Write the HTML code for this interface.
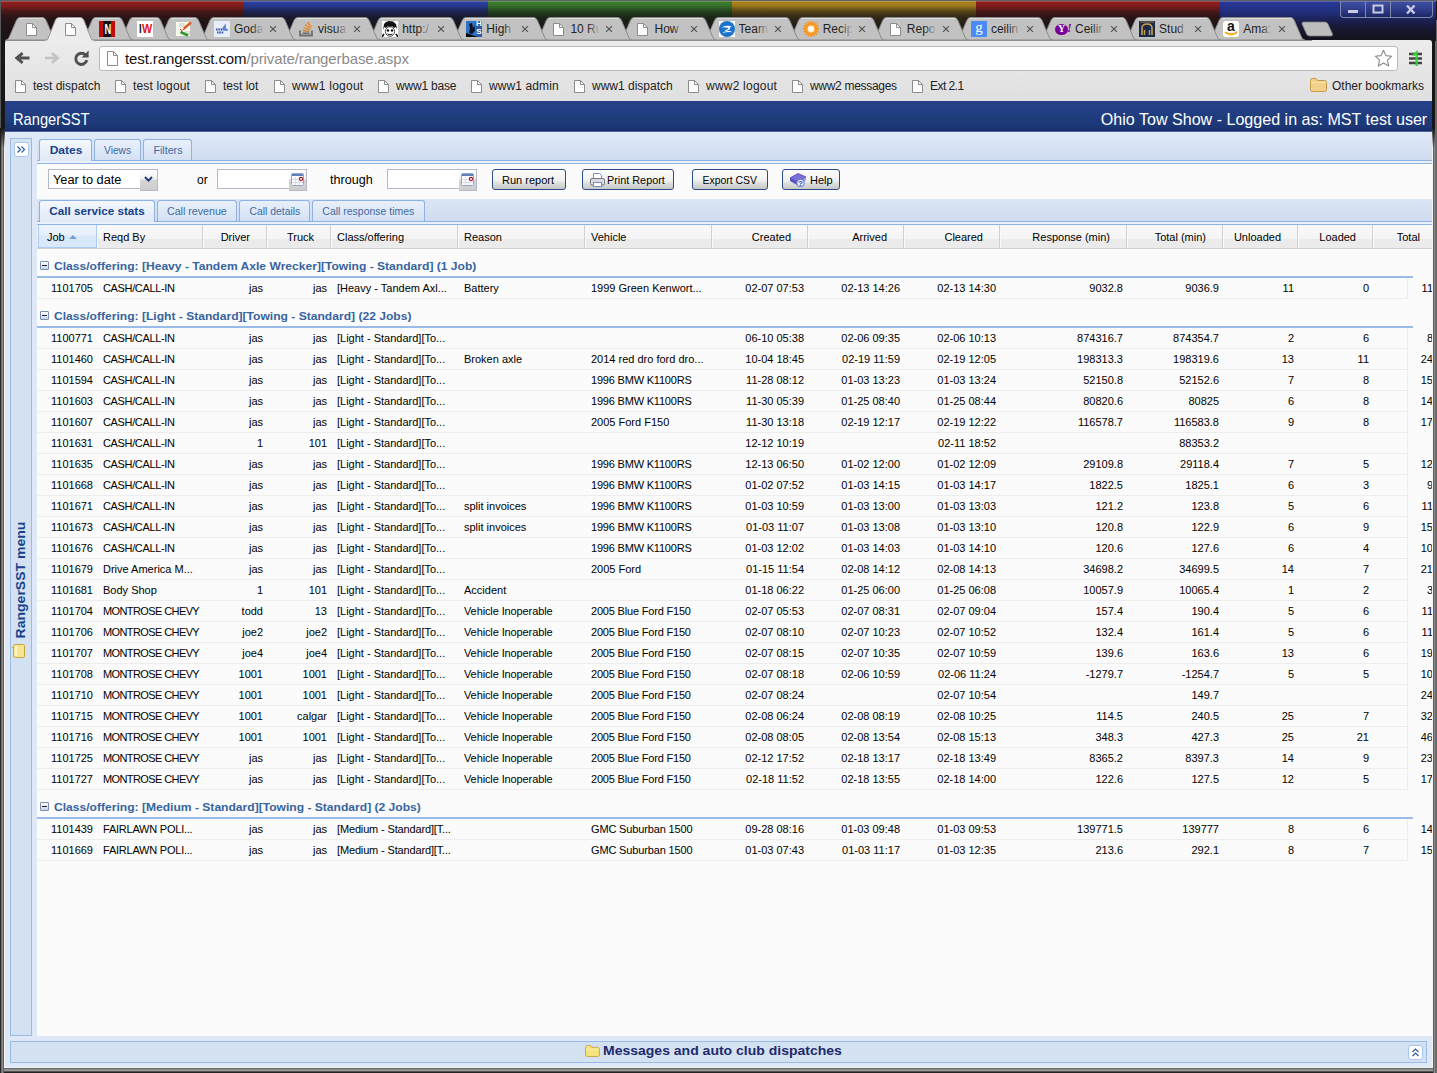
<!DOCTYPE html>
<html><head><meta charset="utf-8"><title>RangerSST</title>
<style>
*{box-sizing:border-box}
html,body{margin:0;padding:0}
body{width:1437px;height:1073px;overflow:hidden;background:#171717;position:relative;font-family:"Liberation Sans",sans-serif}
.abs,#win *{position:absolute}
#win{position:absolute;left:0;top:0;width:1437px;height:1073px;overflow:hidden}
/* title bar */
#tb{left:1px;top:1px;width:1435px;height:40px;background:#1b1b1b}
#tb .seg{top:0;height:40px;width:244px}
#tb .fade{left:0;top:0;width:1435px;height:40px;background:linear-gradient(rgba(20,18,20,0) 0,rgba(20,18,20,.05) 4px,rgba(20,18,20,.2) 6px,rgba(20,18,20,.38) 8px,rgba(20,18,20,.59) 11px,rgba(20,18,20,.73) 14px,rgba(20,18,20,.82) 17px,rgba(20,18,20,.88) 22px,rgba(20,18,20,.92) 30px,rgba(20,18,20,.94) 40px)}
#tb .hl{left:0;top:0;width:1435px;height:1px;background:rgba(255,255,255,.22)}
#frm i{display:block}
/* chrome toolbar */
#ct{left:5px;top:40px;width:1427px;height:61px;background:linear-gradient(#ececec,#e6e6e6 50%,#dfdfdf);border-radius:3px 3px 0 0}
.tabt{font-size:12px;color:#222;top:22px;white-space:nowrap;overflow:hidden;height:15px;line-height:15px}
.tabx{position:absolute}
#omni{left:99px;top:46px;width:1299px;height:25px;background:#fff;border:1px solid #b9b9b9;border-radius:3px}
#url{left:125px;top:49px;font-size:15px;line-height:19px;color:#111;white-space:nowrap;letter-spacing:-.11px}
#url b{position:static;font-weight:normal;color:#8a8a8a}
.bm{top:79px;font-size:12px;line-height:14px;color:#222;white-space:nowrap}
.ic,.fav{position:absolute}
.fav{width:16px;height:16px;top:21px}
.tabfade{top:20px;width:13px;height:18px;background:linear-gradient(90deg,rgba(194,194,194,0),#c2c2c2)}
#wc{left:1340px;top:1px;width:93px;height:17px;border:1px solid #7f88a8;border-top:none;border-radius:0 0 4px 4px;background:linear-gradient(rgba(255,255,255,.12),rgba(255,255,255,0))}
#wc i{top:0;width:1px;height:16px;background:#7f88a8}
/* page */
#pg{left:5px;top:101px;width:1427px;height:966px;background:#dfe8f6;overflow:hidden}
#hdr{left:0;top:0;width:1428px;height:31px;background:linear-gradient(#27408a 0,#233f85 10px,#1f3d7e 15px,#1d3877 24px,#1b3370 29px,#172a60 29px,#172a60 30px,#4a66a3 30px)}
#hdr span{color:#fff;font-size:17px;line-height:20px;top:9px;white-space:nowrap}
#west{left:5px;top:37px;width:22px;height:898px;border:1px solid #99bbe8;background:#d3e1f1}
#south{left:5px;top:940px;width:1417px;height:22px;border:1px solid #99bbe8;background:#d3e1f1}
.tool{width:15px;height:15px;border:1px solid #a9c4ec;border-radius:3px;background:#fff}
#wlbl{left:-50px;top:433px;width:120px;height:16px;line-height:16px;font-size:13px;font-weight:bold;color:#15428b;white-space:nowrap;text-align:center;transform:rotate(-90deg) scaleX(1.078);transform-origin:50% 50%}
#slbl{left:592px;top:1px;font-size:13px;line-height:16px;font-weight:bold;color:#1f2a6e;white-space:nowrap;transform:scaleX(1.077);transform-origin:0 50%}
#ctr{left:32px;top:37px;width:1396px;height:898px;background:#fbfbfb;overflow:hidden}
.strip{left:0;width:1396px;background:linear-gradient(#dbe6f5,#cfdcf0);border-bottom:1px solid #8db2e3}
.tab .sx{transform-origin:50% 50%}
.tab{border:1px solid #8db2e3;border-bottom:none;border-radius:3px 3px 0 0;background:linear-gradient(#e9f0fa,#d4e1f3);font-size:11px;color:#416aa3;text-align:center;line-height:20px;white-space:nowrap}
.tab.act{background:linear-gradient(#f4f8fd,#dfe8f6);color:#15428b;font-weight:bold}
.sx{position:static!important;display:inline-block;transform-origin:0 50%}
.lbl{font-size:12px;color:#000;line-height:14px;white-space:nowrap}
.fld{height:20px;border:1px solid #b5b8c8;background:#fff}
.trg{width:18px;height:22px;border:1px solid #b5b8c8;border-left:none;background:linear-gradient(#fdfdfd 0,#f3f3f3 45%,#d6d6d6 50%,#cdcdcd)}
.btn{height:21px;top:31px;border:1px solid #2c4a85;border-radius:3px;background:linear-gradient(#fdfdfd,#f0f0f0 55%,#dcdcdc 72%,#c9c9c9);font-size:11px;line-height:19px;padding-top:1px;color:#000;text-align:center;white-space:nowrap}
/* grid */
#grid{left:0;top:87px;width:1396px;height:812px;background:#fbfbfb;font-size:11px;color:#000;overflow:hidden}
.ghd{left:0;top:0;width:1500px;height:24px;background:linear-gradient(#f9f9f9,#f4f4f4 60%,#ebebeb 62%,#ebebeb);border-bottom:1px solid #d0d0d0}
.hc{top:0;height:23px;border-right:1px solid #d0d0d0;border-left:1px solid #fafafa}
.hc span{left:5px;top:6px;line-height:13px;white-space:nowrap}
.hc.hr span{left:auto;right:16px}
.hc.sorted{background:linear-gradient(#ebf3fd,#e6effb 45%,#d9e8fb 50%,#d9e8fb);border:1px solid #aaccf6;border-top:none}
.hc.sorted span{left:auto;right:auto;left:8px}
.sa{position:static!important;display:inline-block;width:0;height:0;border:4px solid transparent;border-top:none;border-bottom:4px solid #7a9bd3;margin-left:4px;vertical-align:2px}
.grp{left:0;width:1376px;height:29px;border-bottom:2px solid #99bbe8;font-weight:bold;color:#3764a0;font-size:11px;line-height:13px;padding:11px 0 0 17px;white-space:nowrap}
.gi{left:3px;top:12px;width:9px;height:9px;border:1px solid #7a8fb5;border-radius:1px;background:linear-gradient(#fff,#c9d3e6)}
.gi:after{content:"";position:absolute;left:1px;top:3px;width:5px;height:1px;background:#223}
.row{left:0;width:1371px;height:21px;border-bottom:1px solid #ededed;border-right:1px solid #ededed}
.c{top:4px;line-height:13px;white-space:nowrap;padding-left:6px}
.c.r{text-align:right;padding:0 4px 0 0}
</style></head><body>
<div id="win">
<div id="frm">
 <i style="left:0;top:0;width:1437px;height:1px;background:#5d6166"></i>
 <i style="left:0;top:1px;width:1px;height:1072px;background:#55585c"></i>
 <i style="left:0;top:128px;width:5px;height:945px;background:linear-gradient(90deg,#2a2a2a 0,#2a2a2a 1px,#6c6c6c 1px,#6c6c6c 2px,#8e8e8e 2px,#8e8e8e 3px,#5e5e5e 3px,#5e5e5e 4px,#f4f4f4 4px)"></i>
 <i style="left:0;top:128px;width:5px;height:20px;background:linear-gradient(#171717,rgba(23,23,23,0))"></i>
 <i style="left:1432px;top:128px;width:5px;height:945px;background:linear-gradient(90deg,#f4f4f4 0,#f4f4f4 1px,#5e5e5e 1px,#5e5e5e 2px,#8e8e8e 2px,#8e8e8e 3px,#6c6c6c 3px,#6c6c6c 4px,#2a2a2a 4px)"></i>
 <i style="left:1432px;top:128px;width:5px;height:20px;background:linear-gradient(#171717,rgba(23,23,23,0))"></i>
 <i style="left:1435px;top:20px;width:2px;height:1053px;background:#6a6a6a"></i>
 <i style="left:4px;top:1067px;width:1429px;height:6px;background:linear-gradient(#f4f4f4 0,#f4f4f4 1px,#666 1px,#666 2px,#8c8c8c 2px,#9a9a9a 4px,#555 4px,#555 5px,#222 5px)"></i>
</div>
<div id="tb">
 <div class="seg" style="left:0;background:#8c1f1d"></div>
 <div class="seg" style="left:243px;background:#2a3d9c"></div>
 <div class="seg" style="left:487px;background:#3a7a2c"></div>
 <div class="seg" style="left:731px;background:#a9811c"></div>
 <div class="seg" style="left:975px;background:#8c1f1d"></div>
 <div class="fade"></div>
 <div class="seg" style="left:1219px;width:216px;background:linear-gradient(#283894 0,#263590 4px,#222f80 10px,#1e2868 15px,#1b2050 20px,#18193a 25px,#16162a 30px,#14141c 40px)"></div><div class="hl"></div>
</div>
<div id="ct"></div>
<svg id="tabsvg" style="left:0;top:0" width="1437" height="42" viewBox="0 0 1437 42">
<path d="M1208.6999999999998,40 Q1210.9999999999998,40 1211.9999999999998,37 L1219.1,20.5 Q1220.1,17.5 1223.1999999999998,17.5 L1290.1999999999998,17.5 Q1293.2999999999997,17.5 1294.2999999999997,20.5 L1301.3999999999999,37 Q1302.3999999999999,40 1304.6999999999998,40Z" fill="#c2c2c2" stroke="#8b8b8b" stroke-width="1"/>
<path d="M1221.6999999999998,18.5H1291.6999999999998" stroke="#dcdcdc" stroke-width="1"/>
<path d="M1124.6,40 Q1126.8999999999999,40 1127.8999999999999,37 L1135.0,20.5 Q1136.0,17.5 1139.1,17.5 L1206.1,17.5 Q1209.1999999999998,17.5 1210.1999999999998,20.5 L1217.3,37 Q1218.3,40 1220.6,40Z" fill="#c2c2c2" stroke="#8b8b8b" stroke-width="1"/>
<path d="M1137.6,18.5H1207.6" stroke="#dcdcdc" stroke-width="1"/>
<path d="M1040.5,40 Q1042.8,40 1043.8,37 L1050.9,20.5 Q1051.9,17.5 1055.0,17.5 L1122.0,17.5 Q1125.1,17.5 1126.1,20.5 L1133.2,37 Q1134.2,40 1136.5,40Z" fill="#c2c2c2" stroke="#8b8b8b" stroke-width="1"/>
<path d="M1053.5,18.5H1123.5" stroke="#dcdcdc" stroke-width="1"/>
<path d="M956.4,40 Q958.6999999999999,40 959.6999999999999,37 L966.8,20.5 Q967.8,17.5 970.9,17.5 L1037.9,17.5 Q1041.0,17.5 1042.0,20.5 L1049.1000000000001,37 Q1050.1000000000001,40 1052.4,40Z" fill="#c2c2c2" stroke="#8b8b8b" stroke-width="1"/>
<path d="M969.4,18.5H1039.4" stroke="#dcdcdc" stroke-width="1"/>
<path d="M872.3,40 Q874.5999999999999,40 875.5999999999999,37 L882.6999999999999,20.5 Q883.6999999999999,17.5 886.8,17.5 L953.8,17.5 Q956.9,17.5 957.9,20.5 L965.0,37 Q966.0,40 968.3,40Z" fill="#c2c2c2" stroke="#8b8b8b" stroke-width="1"/>
<path d="M885.3,18.5H955.3" stroke="#dcdcdc" stroke-width="1"/>
<path d="M788.1999999999999,40 Q790.4999999999999,40 791.4999999999999,37 L798.5999999999999,20.5 Q799.5999999999999,17.5 802.6999999999999,17.5 L869.6999999999999,17.5 Q872.8,17.5 873.8,20.5 L880.9,37 Q881.9,40 884.1999999999999,40Z" fill="#c2c2c2" stroke="#8b8b8b" stroke-width="1"/>
<path d="M801.1999999999999,18.5H871.1999999999999" stroke="#dcdcdc" stroke-width="1"/>
<path d="M704.0999999999999,40 Q706.3999999999999,40 707.3999999999999,37 L714.4999999999999,20.5 Q715.4999999999999,17.5 718.5999999999999,17.5 L785.5999999999999,17.5 Q788.6999999999999,17.5 789.6999999999999,20.5 L796.8,37 Q797.8,40 800.0999999999999,40Z" fill="#c2c2c2" stroke="#8b8b8b" stroke-width="1"/>
<path d="M717.0999999999999,18.5H787.0999999999999" stroke="#dcdcdc" stroke-width="1"/>
<path d="M620.0,40 Q622.3,40 623.3,37 L630.4,20.5 Q631.4,17.5 634.5,17.5 L701.5,17.5 Q704.6,17.5 705.6,20.5 L712.7,37 Q713.7,40 716.0,40Z" fill="#c2c2c2" stroke="#8b8b8b" stroke-width="1"/>
<path d="M633.0,18.5H703.0" stroke="#dcdcdc" stroke-width="1"/>
<path d="M535.9,40 Q538.1999999999999,40 539.1999999999999,37 L546.3,20.5 Q547.3,17.5 550.4,17.5 L617.4,17.5 Q620.5,17.5 621.5,20.5 L628.6,37 Q629.6,40 631.9,40Z" fill="#c2c2c2" stroke="#8b8b8b" stroke-width="1"/>
<path d="M548.9,18.5H618.9" stroke="#dcdcdc" stroke-width="1"/>
<path d="M451.79999999999995,40 Q454.09999999999997,40 455.09999999999997,37 L462.19999999999993,20.5 Q463.19999999999993,17.5 466.29999999999995,17.5 L533.3,17.5 Q536.4,17.5 537.4,20.5 L544.5,37 Q545.5,40 547.8,40Z" fill="#c2c2c2" stroke="#8b8b8b" stroke-width="1"/>
<path d="M464.79999999999995,18.5H534.8" stroke="#dcdcdc" stroke-width="1"/>
<path d="M367.7,40 Q370.0,40 371.0,37 L378.09999999999997,20.5 Q379.09999999999997,17.5 382.2,17.5 L449.2,17.5 Q452.3,17.5 453.3,20.5 L460.4,37 Q461.4,40 463.7,40Z" fill="#c2c2c2" stroke="#8b8b8b" stroke-width="1"/>
<path d="M380.7,18.5H450.7" stroke="#dcdcdc" stroke-width="1"/>
<path d="M283.6,40 Q285.90000000000003,40 286.90000000000003,37 L294.0,20.5 Q295.0,17.5 298.1,17.5 L365.1,17.5 Q368.20000000000005,17.5 369.20000000000005,20.5 L376.3,37 Q377.3,40 379.6,40Z" fill="#c2c2c2" stroke="#8b8b8b" stroke-width="1"/>
<path d="M296.6,18.5H366.6" stroke="#dcdcdc" stroke-width="1"/>
<path d="M199.5,40 Q201.8,40 202.8,37 L209.9,20.5 Q210.9,17.5 214.0,17.5 L281.0,17.5 Q284.1,17.5 285.1,20.5 L292.2,37 Q293.2,40 295.5,40Z" fill="#c2c2c2" stroke="#8b8b8b" stroke-width="1"/>
<path d="M212.5,18.5H282.5" stroke="#dcdcdc" stroke-width="1"/>
<path d="M158,40 Q160.3,40 161.3,37 L168.4,20.5 Q169.4,17.5 172.5,17.5 L194.5,17.5 Q197.6,17.5 198.6,20.5 L205.7,37 Q206.7,40 209,40Z" fill="#c2c2c2" stroke="#8b8b8b" stroke-width="1"/>
<path d="M171,18.5H196" stroke="#dcdcdc" stroke-width="1"/>
<path d="M119,40 Q121.3,40 122.3,37 L129.4,20.5 Q130.4,17.5 133.5,17.5 L156.5,17.5 Q159.6,17.5 160.6,20.5 L167.7,37 Q168.7,40 171,40Z" fill="#c2c2c2" stroke="#8b8b8b" stroke-width="1"/>
<path d="M132,18.5H158" stroke="#dcdcdc" stroke-width="1"/>
<path d="M81.5,40 Q83.8,40 84.8,37 L91.9,20.5 Q92.9,17.5 96.0,17.5 L118.3,17.5 Q121.39999999999999,17.5 122.39999999999999,20.5 L129.5,37 Q130.5,40 132.8,40Z" fill="#c2c2c2" stroke="#8b8b8b" stroke-width="1"/>
<path d="M94.5,18.5H119.8" stroke="#dcdcdc" stroke-width="1"/>
<path d="M6,40 Q8.3,40 9.3,37 L16.4,20.5 Q17.4,17.5 20.5,17.5 L42.0,17.5 Q45.1,17.5 46.1,20.5 L53.2,37 Q54.2,40 56.5,40Z" fill="#c2c2c2" stroke="#8b8b8b" stroke-width="1"/>
<path d="M19,18.5H43.5" stroke="#dcdcdc" stroke-width="1"/>
<path d="M1303.5,22 H1325 Q1327,22 1328,24 L1332.5,34 Q1333,36 1331,36 H1309.5 Q1307.5,36 1306.5,34 L1302,24 Q1301.5,22 1303.5,22Z" fill="#bdbdbd" stroke="#7d7d7d" stroke-width=".8"/>
<path d="M5,40.5H1312" stroke="#8f8f8f" stroke-width="1"/>
<path d="M44.8,41.5 Q47.099999999999994,41.5 48.099999999999994,38.5 L55.199999999999996,20.5 Q56.199999999999996,17.5 59.3,17.5 L79.9,17.5 Q83.0,17.5 84.0,20.5 L91.10000000000001,38.5 Q92.10000000000001,41.5 94.4,41.5Z" fill="#ececec" stroke="#9a9a9a" stroke-width="1"/>
<path d="M44.8,41.5H94.4" stroke="#ececec" stroke-width="2"/>
<path d="M57.8,18.5H81.4" stroke="#fafafa" stroke-width="1"/>
</svg>
<svg class="ic" style="left:26px;top:22.5px" width="11" height="13" viewBox="0 0 11 13"><path d="M.5 .5H6.5L10.5 4.5V12.5H.5Z" fill="#fdfdfd" stroke="#8c8c8c"/><path d="M6.5 .5V4.5H10.5" fill="none" stroke="#8c8c8c"/></svg>
<svg class="ic" style="left:65px;top:22.5px" width="11" height="13" viewBox="0 0 11 13"><path d="M.5 .5H6.5L10.5 4.5V12.5H.5Z" fill="#fdfdfd" stroke="#8c8c8c"/><path d="M6.5 .5V4.5H10.5" fill="none" stroke="#8c8c8c"/></svg>
<div class="fav" style="left:99px;top:21px"><div style="left:0;top:0;width:16px;height:16px;background:#c20c0c"></div><div style="left:4px;top:0;width:8px;height:16px;background:#161616"></div><span style="left:4px;top:0;width:8px;color:#fff;font-weight:bold;font-size:15px;line-height:16px;text-align:center;transform:scaleX(.62);transform-origin:50% 50%">N</span></div>
<div class="fav" style="left:137px;top:21px"><div style="left:0;top:0;width:16px;height:16px;background:#fff"></div><span style="left:2px;top:2px;font-weight:bold;font-size:12px;line-height:13px;color:#111;transform:scaleX(.8);transform-origin:0 50%">I</span><span style="left:5px;top:2px;font-weight:bold;font-size:12px;line-height:13px;color:#e4131b;transform:scaleX(.9);transform-origin:0 50%">W</span></div>
<svg class="fav" style="left:176px;top:21px" width="16" height="16" viewBox="0 0 16 16"><rect x="0" y="1" width="14" height="14" fill="#fbf8ee"/><path d="M3 3h6M3 5h5M9 11h5M10 13h4" stroke="#c9c9b8" stroke-width="1"/><path d="M15 1.5L8 7.5" stroke="#d2622a" stroke-width="2.6"/><path d="M8.3 7.2L5.5 9.5L8.8 8.6Z" fill="#c8251d"/><path d="M4.5 11L12 14.5" stroke="#2f9a2f" stroke-width="3"/><path d="M4 8l2 2" stroke="#d33" stroke-width="1"/></svg>
<svg class="fav" style="left:214px;top:21px" width="16" height="16" viewBox="0 0 16 16"><rect width="16" height="16" fill="#e8eef8"/><path d="M8 7.5L11.5 2.5L12 7.5L14.5 8.5L13 10L8.5 9.5Z" fill="#5f83cc"/><path d="M2 8.5h6M3 11.5h7" stroke="#3b5aa8" stroke-width="1.8" stroke-dasharray="1.6 .7"/></svg>
<div class="tabt" style="left:234.0px;width:29px">Goda</div>
<div class="tabfade" style="left:251.0px"></div>
<svg class="tabx" style="left:269.0px;top:24.5px" width="8" height="8" viewBox="0 0 9 9"><path d="M1.2 1.2L7.8 7.8M7.8 1.2L1.2 7.8" stroke="#555" stroke-width="1.35"/></svg>
<svg class="fav" style="left:298px;top:21px" width="16" height="16" viewBox="0 0 16 16"><path d="M2 9.5v5h12v-5" fill="none" stroke="#6e6e6e" stroke-width="1.8"/><path d="M4.5 12.2h7" stroke="#6e6e6e" stroke-width="1.5"/><path d="M4.7 9.6l6.8.9" stroke="#c9853f" stroke-width="1.5"/><path d="M5.4 6.6l6.4 2.3" stroke="#dd8a33" stroke-width="1.5"/><path d="M7 3.6l5.4 3.9" stroke="#ee8a22" stroke-width="1.5"/><path d="M9.6 1.2l3.6 5.2" stroke="#f48024" stroke-width="1.5"/></svg>
<div class="tabt" style="left:318.1px;width:29px">visua</div>
<div class="tabfade" style="left:335.1px"></div>
<svg class="tabx" style="left:353.1px;top:24.5px" width="8" height="8" viewBox="0 0 9 9"><path d="M1.2 1.2L7.8 7.8M7.8 1.2L1.2 7.8" stroke="#555" stroke-width="1.35"/></svg>
<svg class="fav" style="left:382px;top:21px" width="16" height="16" viewBox="0 0 16 16"><rect width="16" height="16" fill="#fff"/><path d="M1 9L2 3L4 1L7 0L11 0.5L14 3L15 8L13.5 6L12 7L10 5L8 7L6 5L4 7L2.5 6Z" fill="#111"/><ellipse cx="8" cy="10.5" rx="4.6" ry="4.8" fill="#fff" stroke="#222" stroke-width=".8"/><circle cx="6" cy="9.5" r="1.2" fill="#111"/><circle cx="10" cy="9.5" r="1.2" fill="#111"/><path d="M5.5 13q2.5 1.6 5 0" stroke="#111" fill="none"/><path d="M0 16l2-3M16 16l-2-3" stroke="#111" stroke-width="1.6"/></svg>
<div class="tabt" style="left:402.2px;width:29px">http:/</div>
<div class="tabfade" style="left:419.2px"></div>
<svg class="tabx" style="left:437.2px;top:24.5px" width="8" height="8" viewBox="0 0 9 9"><path d="M1.2 1.2L7.8 7.8M7.8 1.2L1.2 7.8" stroke="#555" stroke-width="1.35"/></svg>
<svg class="fav" style="left:466px;top:21px" width="16" height="16" viewBox="0 0 16 16"><rect width="16" height="16" fill="#1e3f86"/><path d="M0 0H16V16H0Z" fill="#2f74c4"/><path d="M3 3L6 2L7 7L8.5 4L9 10L6 13L3 12L4 7Z" fill="#0c1424"/><path d="M0 12L12 16H0Z" fill="#050608"/><path d="M9 0H16V16H11Z" fill="#2a5aa8"/></svg><span class="fav" style="left:476px;top:20px;width:6px;color:#fff;font-weight:bold;font-size:8px;line-height:8px;text-align:center">H</span><span class="fav" style="left:476px;top:28px;width:6px;color:#fff;font-weight:bold;font-size:8px;line-height:8px;text-align:center">S</span>
<div class="tabt" style="left:486.3px;width:29px">High</div>
<div class="tabfade" style="left:503.3px"></div>
<svg class="tabx" style="left:521.3px;top:24.5px" width="8" height="8" viewBox="0 0 9 9"><path d="M1.2 1.2L7.8 7.8M7.8 1.2L1.2 7.8" stroke="#555" stroke-width="1.35"/></svg>
<svg class="ic" style="left:553px;top:22.5px" width="11" height="13" viewBox="0 0 11 13"><path d="M.5 .5H6.5L10.5 4.5V12.5H.5Z" fill="#fdfdfd" stroke="#8c8c8c"/><path d="M6.5 .5V4.5H10.5" fill="none" stroke="#8c8c8c"/></svg>
<div class="tabt" style="left:570.4px;width:29px">10 Ru</div>
<div class="tabfade" style="left:587.4px"></div>
<svg class="tabx" style="left:605.4px;top:24.5px" width="8" height="8" viewBox="0 0 9 9"><path d="M1.2 1.2L7.8 7.8M7.8 1.2L1.2 7.8" stroke="#555" stroke-width="1.35"/></svg>
<svg class="ic" style="left:637px;top:22.5px" width="11" height="13" viewBox="0 0 11 13"><path d="M.5 .5H6.5L10.5 4.5V12.5H.5Z" fill="#fdfdfd" stroke="#8c8c8c"/><path d="M6.5 .5V4.5H10.5" fill="none" stroke="#8c8c8c"/></svg>
<div class="tabt" style="left:654.5px;width:29px">How</div>
<div class="tabfade" style="left:671.5px"></div>
<svg class="tabx" style="left:689.5px;top:24.5px" width="8" height="8" viewBox="0 0 9 9"><path d="M1.2 1.2L7.8 7.8M7.8 1.2L1.2 7.8" stroke="#555" stroke-width="1.35"/></svg>
<svg class="fav" style="left:719px;top:21px" width="16" height="16" viewBox="0 0 16 16"><rect width="16" height="16" fill="#fff"/><circle cx="8" cy="8" r="8" fill="#1b74c9"/><path d="M2.2 6.2Q8 3.6 13 5.4L10.8 6.3Q12 8.4 8.4 9.6Q5 10.5 3.2 12.4Q7.5 10.7 13.6 11.2Q9 8.7 5.4 11.5Q5 9 9 7.9Q10 7.4 9.2 6.8Q6 6 2.2 6.2Z" fill="#fff"/></svg>
<div class="tabt" style="left:738.6px;width:29px">Team</div>
<div class="tabfade" style="left:755.6px"></div>
<svg class="tabx" style="left:773.6px;top:24.5px" width="8" height="8" viewBox="0 0 9 9"><path d="M1.2 1.2L7.8 7.8M7.8 1.2L1.2 7.8" stroke="#555" stroke-width="1.35"/></svg>
<svg class="fav" style="left:803px;top:21px" width="16" height="16" viewBox="0 0 16 16"><circle cx="8" cy="8" r="6.8" fill="#f9a53a"/><path d="M8 8L15.94 7.04L15.94 8.96Z" fill="#f7941d"/><path d="M8 8L15.70 10.15L14.97 11.92Z" fill="#f7941d"/><path d="M8 8L14.29 12.94L12.94 14.29Z" fill="#f7941d"/><path d="M8 8L11.92 14.97L10.15 15.70Z" fill="#f7941d"/><path d="M8 8L8.96 15.94L7.04 15.94Z" fill="#f7941d"/><path d="M8 8L5.85 15.70L4.08 14.97Z" fill="#f7941d"/><path d="M8 8L3.06 14.29L1.71 12.94Z" fill="#f7941d"/><path d="M8 8L1.03 11.92L0.30 10.15Z" fill="#f7941d"/><path d="M8 8L0.06 8.96L0.06 7.04Z" fill="#f7941d"/><path d="M8 8L0.30 5.85L1.03 4.08Z" fill="#f7941d"/><path d="M8 8L1.71 3.06L3.06 1.71Z" fill="#f7941d"/><path d="M8 8L4.08 1.03L5.85 0.30Z" fill="#f7941d"/><path d="M8 8L7.04 0.06L8.96 0.06Z" fill="#f7941d"/><path d="M8 8L10.15 0.30L11.92 1.03Z" fill="#f7941d"/><path d="M8 8L12.94 1.71L14.29 3.06Z" fill="#f7941d"/><path d="M8 8L14.97 4.08L15.70 5.85Z" fill="#f7941d"/><circle cx="8" cy="8" r="3.4" fill="#fff3d6"/><circle cx="8" cy="8" r="2" fill="#fff"/></svg>
<div class="tabt" style="left:822.7px;width:29px">Recip</div>
<div class="tabfade" style="left:839.7px"></div>
<svg class="tabx" style="left:857.7px;top:24.5px" width="8" height="8" viewBox="0 0 9 9"><path d="M1.2 1.2L7.8 7.8M7.8 1.2L1.2 7.8" stroke="#555" stroke-width="1.35"/></svg>
<svg class="ic" style="left:890px;top:22.5px" width="11" height="13" viewBox="0 0 11 13"><path d="M.5 .5H6.5L10.5 4.5V12.5H.5Z" fill="#fdfdfd" stroke="#8c8c8c"/><path d="M6.5 .5V4.5H10.5" fill="none" stroke="#8c8c8c"/></svg>
<div class="tabt" style="left:906.8px;width:29px">Repo</div>
<div class="tabfade" style="left:923.8px"></div>
<svg class="tabx" style="left:941.8px;top:24.5px" width="8" height="8" viewBox="0 0 9 9"><path d="M1.2 1.2L7.8 7.8M7.8 1.2L1.2 7.8" stroke="#555" stroke-width="1.35"/></svg>
<div class="fav" style="left:971px;top:21px"><div style="left:0;top:0;width:16px;height:16px;background:#4a8af4;border-radius:1px"></div><span style="left:0;top:-2px;width:16px;text-align:center;color:#fff;font-size:15px;line-height:16px;font-family:'Liberation Serif',serif">g</span></div>
<div class="tabt" style="left:990.9px;width:29px">ceilin</div>
<div class="tabfade" style="left:1007.9px"></div>
<svg class="tabx" style="left:1025.9px;top:24.5px" width="8" height="8" viewBox="0 0 9 9"><path d="M1.2 1.2L7.8 7.8M7.8 1.2L1.2 7.8" stroke="#555" stroke-width="1.35"/></svg>
<div class="fav" style="left:1055px;top:21px"><div style="left:0;top:3px;width:13px;height:11px;border-radius:50%;background:#7b0099"></div><span style="left:1px;top:2px;width:11px;text-align:center;color:#fff;font-weight:bold;font-size:10px;line-height:12px;font-family:'Liberation Serif',serif">Y</span><span style="left:12px;top:1px;color:#7b0099;font-weight:bold;font-size:12px;line-height:13px;font-style:italic;font-family:'Liberation Serif',serif">!</span></div>
<div class="tabt" style="left:1075.0px;width:29px">Ceilir</div>
<div class="tabfade" style="left:1092.0px"></div>
<svg class="tabx" style="left:1110.0px;top:24.5px" width="8" height="8" viewBox="0 0 9 9"><path d="M1.2 1.2L7.8 7.8M7.8 1.2L1.2 7.8" stroke="#555" stroke-width="1.35"/></svg>
<svg class="fav" style="left:1139px;top:21px" width="16" height="16" viewBox="0 0 16 16"><rect width="16" height="16" fill="#1c2a4a"/><path d="M3 14V7Q3 3 8 3Q13 3 13 7V14" fill="none" stroke="#caa04a" stroke-width="1.6"/><path d="M5.5 14V9M10.5 14V9" stroke="#caa04a" stroke-width="1.4"/><path d="M1 1h14" stroke="#8a7a4a" stroke-width="1"/></svg>
<div class="tabt" style="left:1159.1px;width:29px">Stud</div>
<div class="tabfade" style="left:1176.1px"></div>
<svg class="tabx" style="left:1194.1px;top:24.5px" width="8" height="8" viewBox="0 0 9 9"><path d="M1.2 1.2L7.8 7.8M7.8 1.2L1.2 7.8" stroke="#555" stroke-width="1.35"/></svg>
<div class="fav" style="left:1223px;top:21px"><div style="left:0;top:0;width:16px;height:16px;background:#fff;border-radius:3px"></div><span style="left:0;top:-3px;width:16px;text-align:center;color:#111;font-weight:bold;font-size:14px;line-height:16px">a</span><svg style="left:0;top:0" width="16" height="16" viewBox="0 0 16 16"><path d="M2 11.2Q8 15.4 13.4 11.6" fill="none" stroke="#f90" stroke-width="1.6"/><path d="M12 10.6l2.6-.2-.8 2.4z" fill="#f90"/></svg></div>
<div class="tabt" style="left:1243.2px;width:29px">Ama:</div>
<div class="tabfade" style="left:1260.2px"></div>
<svg class="tabx" style="left:1278.2px;top:24.5px" width="8" height="8" viewBox="0 0 9 9"><path d="M1.2 1.2L7.8 7.8M7.8 1.2L1.2 7.8" stroke="#555" stroke-width="1.35"/></svg>
<div id="omni"></div>
<div id="url">test.rangersst.com<b>/private/rangerbase.aspx</b></div>
<svg class="ic" style="left:13px;top:50px" width="80" height="18" viewBox="0 0 80 18">
<path d="M16.5 8H6.5M9.6 3.2L3.8 8L9.6 12.8" fill="none" stroke="#4f4f4f" stroke-width="2.9" stroke-linejoin="miter"/>
<path d="M32 8H42M38.9 3.2L44.7 8L38.9 12.8" fill="none" stroke="#c2c2c2" stroke-width="2.7"/>
<path d="M72.6 5.2A5.6 5.6 0 1 0 73.8 10.2" fill="none" stroke="#4f4f4f" stroke-width="2.9"/>
<path d="M75.6 .6V7.6H68.6Z" fill="#4f4f4f"/>
</svg>
<svg class="ic" style="left:107px;top:51px" width="11" height="15" viewBox="0 0 11 15"><path d="M.5 .5H6.5L10.5 4.5V14.5H.5Z" fill="#fdfdfd" stroke="#8c8c8c"/><path d="M6.5 .5V4.5H10.5" fill="none" stroke="#8c8c8c"/></svg>
<svg class="ic" style="left:1374px;top:49px" width="19" height="18" viewBox="0 0 19 18"><path d="M9.5 1.2L11.9 6.6L17.8 7.2L13.4 11.1L14.7 16.9L9.5 13.9L4.3 16.9L5.6 11.1L1.2 7.2L7.1 6.6Z" fill="#fff" stroke="#8a8a8a" stroke-width="1.1" stroke-linejoin="round"/></svg>
<svg class="ic" style="left:1408px;top:50px" width="16" height="17" viewBox="0 0 16 17"><path d="M1 4H14M1 8.5H14M1 13H14" stroke="#444" stroke-width="2.4"/><path d="M5 5.5L8.6 2.4V16" fill="none" stroke="#2fd32f" stroke-width="2.2"/></svg>
<div id="wc"><i style="left:24px"></i><i style="left:49px"></i>
<svg style="left:0;top:0" width="91" height="16" viewBox="0 0 91 16"><path d="M7 10.5H17" stroke="#c9cbe0" stroke-width="3"/><rect x="32.5" y="4.5" width="9" height="7" fill="none" stroke="#c9cbe0" stroke-width="2"/><path d="M66 4.5L73.5 12.5M73.5 4.5L66 12.5" stroke="#c9cbe0" stroke-width="2.4"/></svg></div>
<svg class="ic" style="left:15px;top:79.5px" width="11" height="13" viewBox="0 0 11 13"><path d="M.5 .5H6.5L10.5 4.5V12.5H.5Z" fill="#fdfdfd" stroke="#8c8c8c"/><path d="M6.5 .5V4.5H10.5" fill="none" stroke="#8c8c8c"/></svg>
<div class="bm" style="left:33px;letter-spacing:0px">test dispatch</div>
<svg class="ic" style="left:115px;top:79.5px" width="11" height="13" viewBox="0 0 11 13"><path d="M.5 .5H6.5L10.5 4.5V12.5H.5Z" fill="#fdfdfd" stroke="#8c8c8c"/><path d="M6.5 .5V4.5H10.5" fill="none" stroke="#8c8c8c"/></svg>
<div class="bm" style="left:133px;letter-spacing:0.15px">test logout</div>
<svg class="ic" style="left:205px;top:79.5px" width="11" height="13" viewBox="0 0 11 13"><path d="M.5 .5H6.5L10.5 4.5V12.5H.5Z" fill="#fdfdfd" stroke="#8c8c8c"/><path d="M6.5 .5V4.5H10.5" fill="none" stroke="#8c8c8c"/></svg>
<div class="bm" style="left:223px;letter-spacing:0px">test lot</div>
<svg class="ic" style="left:274px;top:79.5px" width="11" height="13" viewBox="0 0 11 13"><path d="M.5 .5H6.5L10.5 4.5V12.5H.5Z" fill="#fdfdfd" stroke="#8c8c8c"/><path d="M6.5 .5V4.5H10.5" fill="none" stroke="#8c8c8c"/></svg>
<div class="bm" style="left:292px;letter-spacing:0.25px">www1 logout</div>
<svg class="ic" style="left:378px;top:79.5px" width="11" height="13" viewBox="0 0 11 13"><path d="M.5 .5H6.5L10.5 4.5V12.5H.5Z" fill="#fdfdfd" stroke="#8c8c8c"/><path d="M6.5 .5V4.5H10.5" fill="none" stroke="#8c8c8c"/></svg>
<div class="bm" style="left:396px;letter-spacing:-0.2px">www1 base</div>
<svg class="ic" style="left:471px;top:79.5px" width="11" height="13" viewBox="0 0 11 13"><path d="M.5 .5H6.5L10.5 4.5V12.5H.5Z" fill="#fdfdfd" stroke="#8c8c8c"/><path d="M6.5 .5V4.5H10.5" fill="none" stroke="#8c8c8c"/></svg>
<div class="bm" style="left:489px;letter-spacing:0.1px">www1 admin</div>
<svg class="ic" style="left:574px;top:79.5px" width="11" height="13" viewBox="0 0 11 13"><path d="M.5 .5H6.5L10.5 4.5V12.5H.5Z" fill="#fdfdfd" stroke="#8c8c8c"/><path d="M6.5 .5V4.5H10.5" fill="none" stroke="#8c8c8c"/></svg>
<div class="bm" style="left:592px;letter-spacing:0px">www1 dispatch</div>
<svg class="ic" style="left:688px;top:79.5px" width="11" height="13" viewBox="0 0 11 13"><path d="M.5 .5H6.5L10.5 4.5V12.5H.5Z" fill="#fdfdfd" stroke="#8c8c8c"/><path d="M6.5 .5V4.5H10.5" fill="none" stroke="#8c8c8c"/></svg>
<div class="bm" style="left:706px;letter-spacing:0.22px">www2 logout</div>
<svg class="ic" style="left:792px;top:79.5px" width="11" height="13" viewBox="0 0 11 13"><path d="M.5 .5H6.5L10.5 4.5V12.5H.5Z" fill="#fdfdfd" stroke="#8c8c8c"/><path d="M6.5 .5V4.5H10.5" fill="none" stroke="#8c8c8c"/></svg>
<div class="bm" style="left:810px;letter-spacing:-0.3px">www2 messages</div>
<svg class="ic" style="left:912px;top:79.5px" width="11" height="13" viewBox="0 0 11 13"><path d="M.5 .5H6.5L10.5 4.5V12.5H.5Z" fill="#fdfdfd" stroke="#8c8c8c"/><path d="M6.5 .5V4.5H10.5" fill="none" stroke="#8c8c8c"/></svg>
<div class="bm" style="left:930px;letter-spacing:-0.55px">Ext 2.1</div>
<svg class="ic" style="left:1310px;top:78px" width="17" height="14" viewBox="0 0 17 14"><path d="M.5 2.5Q.5 .5 2.5 .5H6L7.5 2.5H14.5Q16.5 2.5 16.5 4.5V11.5Q16.5 13.5 14.5 13.5H2.5Q.5 13.5 .5 11.5Z" fill="#f3d08b" stroke="#c99a45"/><path d="M1 4.5H16" stroke="#fbe6b8"/></svg>
<div class="bm" style="left:1332px">Other bookmarks</div>
<div id="pg">
 <div id="hdr"><span style="left:8px;transform:scaleX(.862);transform-origin:0 50%">RangerSST</span><span style="right:6px;transform:scaleX(.9455);transform-origin:100% 50%">Ohio Tow Show - Logged in as: MST test user</span></div>
 <div id="west">
  <div class="tool" style="left:3px;top:3px"><svg style="left:0;top:0" width="13" height="13" viewBox="0 0 13 13"><path d="M2.5 3.5L5.5 6.5L2.5 9.5M6.5 3.5L9.5 6.5L6.5 9.5" fill="none" stroke="#2f5a9a" stroke-width="1.2"/></svg></div>
  <div id="wlbl">RangerSST menu</div>
  <svg style="left:1px;top:504px" width="14" height="16" viewBox="0 0 14 16"><path d="M1.5 3.5Q1.5 1.5 3.5 1.5H11.5Q12.5 1.5 12.5 2.5V13.5Q12.5 14.5 11.5 14.5H3.5Q1.5 14.5 1.5 12.5Z" fill="#f6e58e" stroke="#c9a53f"/><path d="M1.5 4.5H-1" stroke="#c9a53f"/><path d="M4 3V13" stroke="#fff7c8" stroke-width="2"/></svg>
 </div>
 <div id="ctr">
  <div class="strip" style="top:0;height:23px"></div>
  <div class="tab act" style="left:2px;top:1px;width:53px;height:22px"><span class="sx" style="transform:scaleX(1.09)">Dates</span></div>
  <div class="tab" style="left:57px;top:1px;width:47px;height:21px"><span class="sx" style="transform:scaleX(.93)">Views</span></div>
  <div class="tab" style="left:106px;top:1px;width:49px;height:21px"><span class="sx" style="transform:scaleX(.97)">Filters</span></div>
  <div style="left:0;top:23px;width:1396px;height:2px;background:#eaf1fb"></div><div id="tbar" style="left:0;top:25px;width:1396px;height:1px;background:#8db2e3"></div>
  <div class="fld" style="left:11px;top:31px;width:93px"></div>
  <div class="trg" style="left:103px;top:31px"><svg style="left:4px;top:6px" width="9" height="7" viewBox="0 0 9 7"><path d="M1 1L4.5 4.6L8 1" fill="none" stroke="#1c3a80" stroke-width="1.9"/></svg></div>
  <div class="lbl" style="left:16px;top:35px"><span class="sx" style="transform:scaleX(1.064)">Year to date</span></div>
  <div class="lbl" style="left:160px;top:35px"><span class="sx">or</span></div>
  <div class="fld" style="left:180px;top:31px;width:73px"></div>
  <div class="trg" style="left:252px;top:31px"><svg style="left:2px;top:3px" width="13" height="13" viewBox="0 0 13 13"><rect x=".5" y=".5" width="12" height="12" rx="1" fill="#fdfdfd" stroke="#8fa6cc"/><rect x="1" y="1" width="11" height="2" fill="#5f80b8"/><path d="M1 6.5H12M1 9.5H12M4.5 4V12M8 4V12" stroke="#d5ddea" stroke-width="1"/><circle cx="10" cy="6" r="1.6" fill="#fff" stroke="#a0121c" stroke-width="1.1"/></svg></div>
  <div class="lbl" style="left:293px;top:35px"><span class="sx" style="transform:scaleX(1.05)">through</span></div>
  <div class="fld" style="left:350px;top:31px;width:73px"></div>
  <div class="trg" style="left:422px;top:31px"><svg style="left:2px;top:3px" width="13" height="13" viewBox="0 0 13 13"><rect x=".5" y=".5" width="12" height="12" rx="1" fill="#fdfdfd" stroke="#8fa6cc"/><rect x="1" y="1" width="11" height="2" fill="#5f80b8"/><path d="M1 6.5H12M1 9.5H12M4.5 4V12M8 4V12" stroke="#d5ddea" stroke-width="1"/><circle cx="10" cy="6" r="1.6" fill="#fff" stroke="#a0121c" stroke-width="1.1"/></svg></div>
  <div class="btn" style="left:455px;width:74px"><span class="sx" style="margin-left:-2px">Run report</span></div>
  <div class="btn" style="left:545px;width:92px;text-align:left"><svg style="left:6px;top:2px" width="17" height="16" viewBox="0 0 17 16"><path d="M4.5 6.5V1.5H10.5L12.5 3.5V6.5" fill="#fff" stroke="#6f8fc8"/><rect x="1.5" y="6.5" width="14" height="6.5" rx="1.5" fill="#d9d9de" stroke="#77777f"/><rect x="4.5" y="10.5" width="8" height="4" fill="#fff" stroke="#6f8fc8"/></svg><span class="sx" style="margin-left:24px;transform:scaleX(.985)">Print Report</span></div>
  <div class="btn" style="left:655px;width:76px"><span class="sx" style="transform:scaleX(.95);transform-origin:50% 50%">Export CSV</span></div>
  <div class="btn" style="left:745px;width:58px;text-align:left"><svg style="left:6px;top:2px" width="18" height="16" viewBox="0 0 18 16"><path d="M1 6L9 1.5L17 5L9 10Z" fill="#7a72d8" stroke="#4a3fb0" stroke-width=".8"/><path d="M1 6V9L9 13.5V10Z" fill="#5b52c4"/><path d="M9 10V13.5L17 8V5Z" fill="#9a94e6"/><circle cx="11.5" cy="11" r="3.8" fill="#e9eefc" stroke="#5570c8" stroke-width=".9"/></svg><span class="sx" style="margin-left:27px">Help</span><span style="left:15px;top:9px;font-size:8px;line-height:9px;font-weight:bold;color:#2a46b0">?</span></div>
  <div class="strip" style="top:61px;height:23px"></div>
  <div style="left:0;top:84px;width:1396px;height:2px;background:#eaf1fb"></div><div style="left:0;top:86px;width:1396px;height:1px;background:#8db2e3"></div>
  <div class="tab act" style="left:2px;top:62px;width:116px;height:22px"><span class="sx" style="transform:scaleX(1.062)">Call service stats</span></div>
  <div class="tab" style="left:120px;top:62px;width:80px;height:21px"><span class="sx" style="transform:scaleX(.967)">Call revenue</span></div>
  <div class="tab" style="left:202px;top:62px;width:71px;height:21px"><span class="sx" style="transform:scaleX(.944)">Call details</span></div>
  <div class="tab" style="left:275px;top:62px;width:113px;height:21px"><span class="sx" style="transform:scaleX(.951)">Call response times</span></div>
  <div id="grid">
<div class="ghd">
<div class="hc hr sorted" style="left:1px;width:59px"><span>Job<i class="sa"></i></span></div>
<div class="hc" style="left:60px;width:106px"><span>Reqd By</span></div>
<div class="hc hr" style="left:166px;width:64px"><span>Driver</span></div>
<div class="hc hr" style="left:230px;width:64px"><span>Truck</span></div>
<div class="hc" style="left:294px;width:127px"><span>Class/offering</span></div>
<div class="hc" style="left:421px;width:127px"><span>Reason</span></div>
<div class="hc" style="left:548px;width:127px"><span>Vehicle</span></div>
<div class="hc hr" style="left:675px;width:96px"><span>Created</span></div>
<div class="hc hr" style="left:771px;width:96px"><span>Arrived</span></div>
<div class="hc hr" style="left:867px;width:96px"><span>Cleared</span></div>
<div class="hc hr" style="left:963px;width:127px"><span>Response (min)</span></div>
<div class="hc hr" style="left:1090px;width:96px"><span>Total (min)</span></div>
<div class="hc hr" style="left:1186px;width:75px"><span>Unloaded</span></div>
<div class="hc hr" style="left:1261px;width:75px"><span>Loaded</span></div>
<div class="hc hr" style="left:1336px;width:64px"><span>Total</span></div>
</div>
<div class="grp" style="top:24px"><i class="gi"></i><span class="sx" style="transform:scaleX(1.098)">Class/offering: [Heavy - Tandem Axle Wrecker][Towing - Standard] (1 Job)</span></div>
<div class="row" style="top:53px">
<span class="c r" style="left:1px;width:59px">1101705</span>
<span class="c" style="left:60px;width:106px;letter-spacing:-0.35px">CASH/CALL-IN</span>
<span class="c r" style="left:166px;width:64px">jas</span>
<span class="c r" style="left:230px;width:64px">jas</span>
<span class="c" style="left:294px;width:127px">[Heavy - Tandem Axl...</span>
<span class="c" style="left:421px;width:127px">Battery</span>
<span class="c" style="left:548px;width:127px">1999 Green Kenwort...</span>
<span class="c r" style="left:675px;width:96px">02-07 07:53</span>
<span class="c r" style="left:771px;width:96px">02-13 14:26</span>
<span class="c r" style="left:867px;width:96px">02-13 14:30</span>
<span class="c r" style="left:963px;width:127px">9032.8</span>
<span class="c r" style="left:1090px;width:96px">9036.9</span>
<span class="c r" style="left:1186px;width:75px">11</span>
<span class="c r" style="left:1261px;width:75px">0</span>
<span class="c r" style="left:1336px;width:64px">11</span>
</div>
<div class="grp" style="top:74px"><i class="gi"></i><span class="sx" style="transform:scaleX(1.098)">Class/offering: [Light - Standard][Towing - Standard] (22 Jobs)</span></div>
<div class="row" style="top:103px">
<span class="c r" style="left:1px;width:59px">1100771</span>
<span class="c" style="left:60px;width:106px;letter-spacing:-0.35px">CASH/CALL-IN</span>
<span class="c r" style="left:166px;width:64px">jas</span>
<span class="c r" style="left:230px;width:64px">jas</span>
<span class="c" style="left:294px;width:127px">[Light - Standard][To...</span>
<span class="c r" style="left:675px;width:96px">06-10 05:38</span>
<span class="c r" style="left:771px;width:96px">02-06 09:35</span>
<span class="c r" style="left:867px;width:96px">02-06 10:13</span>
<span class="c r" style="left:963px;width:127px">874316.7</span>
<span class="c r" style="left:1090px;width:96px">874354.7</span>
<span class="c r" style="left:1186px;width:75px">2</span>
<span class="c r" style="left:1261px;width:75px">6</span>
<span class="c r" style="left:1336px;width:64px">8</span>
</div>
<div class="row" style="top:124px">
<span class="c r" style="left:1px;width:59px">1101460</span>
<span class="c" style="left:60px;width:106px;letter-spacing:-0.35px">CASH/CALL-IN</span>
<span class="c r" style="left:166px;width:64px">jas</span>
<span class="c r" style="left:230px;width:64px">jas</span>
<span class="c" style="left:294px;width:127px">[Light - Standard][To...</span>
<span class="c" style="left:421px;width:127px">Broken axle</span>
<span class="c" style="left:548px;width:127px">2014 red dro ford dro...</span>
<span class="c r" style="left:675px;width:96px">10-04 18:45</span>
<span class="c r" style="left:771px;width:96px">02-19 11:59</span>
<span class="c r" style="left:867px;width:96px">02-19 12:05</span>
<span class="c r" style="left:963px;width:127px">198313.3</span>
<span class="c r" style="left:1090px;width:96px">198319.6</span>
<span class="c r" style="left:1186px;width:75px">13</span>
<span class="c r" style="left:1261px;width:75px">11</span>
<span class="c r" style="left:1336px;width:64px">24</span>
</div>
<div class="row" style="top:145px">
<span class="c r" style="left:1px;width:59px">1101594</span>
<span class="c" style="left:60px;width:106px;letter-spacing:-0.35px">CASH/CALL-IN</span>
<span class="c r" style="left:166px;width:64px">jas</span>
<span class="c r" style="left:230px;width:64px">jas</span>
<span class="c" style="left:294px;width:127px">[Light - Standard][To...</span>
<span class="c" style="left:548px;width:127px;letter-spacing:-0.2px">1996 BMW K1100RS</span>
<span class="c r" style="left:675px;width:96px">11-28 08:12</span>
<span class="c r" style="left:771px;width:96px">01-03 13:23</span>
<span class="c r" style="left:867px;width:96px">01-03 13:24</span>
<span class="c r" style="left:963px;width:127px">52150.8</span>
<span class="c r" style="left:1090px;width:96px">52152.6</span>
<span class="c r" style="left:1186px;width:75px">7</span>
<span class="c r" style="left:1261px;width:75px">8</span>
<span class="c r" style="left:1336px;width:64px">15</span>
</div>
<div class="row" style="top:166px">
<span class="c r" style="left:1px;width:59px">1101603</span>
<span class="c" style="left:60px;width:106px;letter-spacing:-0.35px">CASH/CALL-IN</span>
<span class="c r" style="left:166px;width:64px">jas</span>
<span class="c r" style="left:230px;width:64px">jas</span>
<span class="c" style="left:294px;width:127px">[Light - Standard][To...</span>
<span class="c" style="left:548px;width:127px;letter-spacing:-0.2px">1996 BMW K1100RS</span>
<span class="c r" style="left:675px;width:96px">11-30 05:39</span>
<span class="c r" style="left:771px;width:96px">01-25 08:40</span>
<span class="c r" style="left:867px;width:96px">01-25 08:44</span>
<span class="c r" style="left:963px;width:127px">80820.6</span>
<span class="c r" style="left:1090px;width:96px">80825</span>
<span class="c r" style="left:1186px;width:75px">6</span>
<span class="c r" style="left:1261px;width:75px">8</span>
<span class="c r" style="left:1336px;width:64px">14</span>
</div>
<div class="row" style="top:187px">
<span class="c r" style="left:1px;width:59px">1101607</span>
<span class="c" style="left:60px;width:106px;letter-spacing:-0.35px">CASH/CALL-IN</span>
<span class="c r" style="left:166px;width:64px">jas</span>
<span class="c r" style="left:230px;width:64px">jas</span>
<span class="c" style="left:294px;width:127px">[Light - Standard][To...</span>
<span class="c" style="left:548px;width:127px">2005 Ford F150</span>
<span class="c r" style="left:675px;width:96px">11-30 13:18</span>
<span class="c r" style="left:771px;width:96px">02-19 12:17</span>
<span class="c r" style="left:867px;width:96px">02-19 12:22</span>
<span class="c r" style="left:963px;width:127px">116578.7</span>
<span class="c r" style="left:1090px;width:96px">116583.8</span>
<span class="c r" style="left:1186px;width:75px">9</span>
<span class="c r" style="left:1261px;width:75px">8</span>
<span class="c r" style="left:1336px;width:64px">17</span>
</div>
<div class="row" style="top:208px">
<span class="c r" style="left:1px;width:59px">1101631</span>
<span class="c" style="left:60px;width:106px;letter-spacing:-0.35px">CASH/CALL-IN</span>
<span class="c r" style="left:166px;width:64px">1</span>
<span class="c r" style="left:230px;width:64px">101</span>
<span class="c" style="left:294px;width:127px">[Light - Standard][To...</span>
<span class="c r" style="left:675px;width:96px">12-12 10:19</span>
<span class="c r" style="left:867px;width:96px">02-11 18:52</span>
<span class="c r" style="left:1090px;width:96px">88353.2</span>
</div>
<div class="row" style="top:229px">
<span class="c r" style="left:1px;width:59px">1101635</span>
<span class="c" style="left:60px;width:106px;letter-spacing:-0.35px">CASH/CALL-IN</span>
<span class="c r" style="left:166px;width:64px">jas</span>
<span class="c r" style="left:230px;width:64px">jas</span>
<span class="c" style="left:294px;width:127px">[Light - Standard][To...</span>
<span class="c" style="left:548px;width:127px;letter-spacing:-0.2px">1996 BMW K1100RS</span>
<span class="c r" style="left:675px;width:96px">12-13 06:50</span>
<span class="c r" style="left:771px;width:96px">01-02 12:00</span>
<span class="c r" style="left:867px;width:96px">01-02 12:09</span>
<span class="c r" style="left:963px;width:127px">29109.8</span>
<span class="c r" style="left:1090px;width:96px">29118.4</span>
<span class="c r" style="left:1186px;width:75px">7</span>
<span class="c r" style="left:1261px;width:75px">5</span>
<span class="c r" style="left:1336px;width:64px">12</span>
</div>
<div class="row" style="top:250px">
<span class="c r" style="left:1px;width:59px">1101668</span>
<span class="c" style="left:60px;width:106px;letter-spacing:-0.35px">CASH/CALL-IN</span>
<span class="c r" style="left:166px;width:64px">jas</span>
<span class="c r" style="left:230px;width:64px">jas</span>
<span class="c" style="left:294px;width:127px">[Light - Standard][To...</span>
<span class="c" style="left:548px;width:127px;letter-spacing:-0.2px">1996 BMW K1100RS</span>
<span class="c r" style="left:675px;width:96px">01-02 07:52</span>
<span class="c r" style="left:771px;width:96px">01-03 14:15</span>
<span class="c r" style="left:867px;width:96px">01-03 14:17</span>
<span class="c r" style="left:963px;width:127px">1822.5</span>
<span class="c r" style="left:1090px;width:96px">1825.1</span>
<span class="c r" style="left:1186px;width:75px">6</span>
<span class="c r" style="left:1261px;width:75px">3</span>
<span class="c r" style="left:1336px;width:64px">9</span>
</div>
<div class="row" style="top:271px">
<span class="c r" style="left:1px;width:59px">1101671</span>
<span class="c" style="left:60px;width:106px;letter-spacing:-0.35px">CASH/CALL-IN</span>
<span class="c r" style="left:166px;width:64px">jas</span>
<span class="c r" style="left:230px;width:64px">jas</span>
<span class="c" style="left:294px;width:127px">[Light - Standard][To...</span>
<span class="c" style="left:421px;width:127px">split invoices</span>
<span class="c" style="left:548px;width:127px;letter-spacing:-0.2px">1996 BMW K1100RS</span>
<span class="c r" style="left:675px;width:96px">01-03 10:59</span>
<span class="c r" style="left:771px;width:96px">01-03 13:00</span>
<span class="c r" style="left:867px;width:96px">01-03 13:03</span>
<span class="c r" style="left:963px;width:127px">121.2</span>
<span class="c r" style="left:1090px;width:96px">123.8</span>
<span class="c r" style="left:1186px;width:75px">5</span>
<span class="c r" style="left:1261px;width:75px">6</span>
<span class="c r" style="left:1336px;width:64px">11</span>
</div>
<div class="row" style="top:292px">
<span class="c r" style="left:1px;width:59px">1101673</span>
<span class="c" style="left:60px;width:106px;letter-spacing:-0.35px">CASH/CALL-IN</span>
<span class="c r" style="left:166px;width:64px">jas</span>
<span class="c r" style="left:230px;width:64px">jas</span>
<span class="c" style="left:294px;width:127px">[Light - Standard][To...</span>
<span class="c" style="left:421px;width:127px">split invoices</span>
<span class="c" style="left:548px;width:127px;letter-spacing:-0.2px">1996 BMW K1100RS</span>
<span class="c r" style="left:675px;width:96px">01-03 11:07</span>
<span class="c r" style="left:771px;width:96px">01-03 13:08</span>
<span class="c r" style="left:867px;width:96px">01-03 13:10</span>
<span class="c r" style="left:963px;width:127px">120.8</span>
<span class="c r" style="left:1090px;width:96px">122.9</span>
<span class="c r" style="left:1186px;width:75px">6</span>
<span class="c r" style="left:1261px;width:75px">9</span>
<span class="c r" style="left:1336px;width:64px">15</span>
</div>
<div class="row" style="top:313px">
<span class="c r" style="left:1px;width:59px">1101676</span>
<span class="c" style="left:60px;width:106px;letter-spacing:-0.35px">CASH/CALL-IN</span>
<span class="c r" style="left:166px;width:64px">jas</span>
<span class="c r" style="left:230px;width:64px">jas</span>
<span class="c" style="left:294px;width:127px">[Light - Standard][To...</span>
<span class="c" style="left:548px;width:127px;letter-spacing:-0.2px">1996 BMW K1100RS</span>
<span class="c r" style="left:675px;width:96px">01-03 12:02</span>
<span class="c r" style="left:771px;width:96px">01-03 14:03</span>
<span class="c r" style="left:867px;width:96px">01-03 14:10</span>
<span class="c r" style="left:963px;width:127px">120.6</span>
<span class="c r" style="left:1090px;width:96px">127.6</span>
<span class="c r" style="left:1186px;width:75px">6</span>
<span class="c r" style="left:1261px;width:75px">4</span>
<span class="c r" style="left:1336px;width:64px">10</span>
</div>
<div class="row" style="top:334px">
<span class="c r" style="left:1px;width:59px">1101679</span>
<span class="c" style="left:60px;width:106px">Drive America M...</span>
<span class="c r" style="left:166px;width:64px">jas</span>
<span class="c r" style="left:230px;width:64px">jas</span>
<span class="c" style="left:294px;width:127px">[Light - Standard][To...</span>
<span class="c" style="left:548px;width:127px">2005 Ford</span>
<span class="c r" style="left:675px;width:96px">01-15 11:54</span>
<span class="c r" style="left:771px;width:96px">02-08 14:12</span>
<span class="c r" style="left:867px;width:96px">02-08 14:13</span>
<span class="c r" style="left:963px;width:127px">34698.2</span>
<span class="c r" style="left:1090px;width:96px">34699.5</span>
<span class="c r" style="left:1186px;width:75px">14</span>
<span class="c r" style="left:1261px;width:75px">7</span>
<span class="c r" style="left:1336px;width:64px">21</span>
</div>
<div class="row" style="top:355px">
<span class="c r" style="left:1px;width:59px">1101681</span>
<span class="c" style="left:60px;width:106px">Body Shop</span>
<span class="c r" style="left:166px;width:64px">1</span>
<span class="c r" style="left:230px;width:64px">101</span>
<span class="c" style="left:294px;width:127px">[Light - Standard][To...</span>
<span class="c" style="left:421px;width:127px">Accident</span>
<span class="c r" style="left:675px;width:96px">01-18 06:22</span>
<span class="c r" style="left:771px;width:96px">01-25 06:00</span>
<span class="c r" style="left:867px;width:96px">01-25 06:08</span>
<span class="c r" style="left:963px;width:127px">10057.9</span>
<span class="c r" style="left:1090px;width:96px">10065.4</span>
<span class="c r" style="left:1186px;width:75px">1</span>
<span class="c r" style="left:1261px;width:75px">2</span>
<span class="c r" style="left:1336px;width:64px">3</span>
</div>
<div class="row" style="top:376px">
<span class="c r" style="left:1px;width:59px">1101704</span>
<span class="c" style="left:60px;width:106px;letter-spacing:-0.6px">MONTROSE CHEVY</span>
<span class="c r" style="left:166px;width:64px">todd</span>
<span class="c r" style="left:230px;width:64px">13</span>
<span class="c" style="left:294px;width:127px">[Light - Standard][To...</span>
<span class="c" style="left:421px;width:127px;letter-spacing:-0.11px">Vehicle Inoperable</span>
<span class="c" style="left:548px;width:127px;letter-spacing:-0.19px">2005 Blue Ford F150</span>
<span class="c r" style="left:675px;width:96px">02-07 05:53</span>
<span class="c r" style="left:771px;width:96px">02-07 08:31</span>
<span class="c r" style="left:867px;width:96px">02-07 09:04</span>
<span class="c r" style="left:963px;width:127px">157.4</span>
<span class="c r" style="left:1090px;width:96px">190.4</span>
<span class="c r" style="left:1186px;width:75px">5</span>
<span class="c r" style="left:1261px;width:75px">6</span>
<span class="c r" style="left:1336px;width:64px">11</span>
</div>
<div class="row" style="top:397px">
<span class="c r" style="left:1px;width:59px">1101706</span>
<span class="c" style="left:60px;width:106px;letter-spacing:-0.6px">MONTROSE CHEVY</span>
<span class="c r" style="left:166px;width:64px">joe2</span>
<span class="c r" style="left:230px;width:64px">joe2</span>
<span class="c" style="left:294px;width:127px">[Light - Standard][To...</span>
<span class="c" style="left:421px;width:127px;letter-spacing:-0.11px">Vehicle Inoperable</span>
<span class="c" style="left:548px;width:127px;letter-spacing:-0.19px">2005 Blue Ford F150</span>
<span class="c r" style="left:675px;width:96px">02-07 08:10</span>
<span class="c r" style="left:771px;width:96px">02-07 10:23</span>
<span class="c r" style="left:867px;width:96px">02-07 10:52</span>
<span class="c r" style="left:963px;width:127px">132.4</span>
<span class="c r" style="left:1090px;width:96px">161.4</span>
<span class="c r" style="left:1186px;width:75px">5</span>
<span class="c r" style="left:1261px;width:75px">6</span>
<span class="c r" style="left:1336px;width:64px">11</span>
</div>
<div class="row" style="top:418px">
<span class="c r" style="left:1px;width:59px">1101707</span>
<span class="c" style="left:60px;width:106px;letter-spacing:-0.6px">MONTROSE CHEVY</span>
<span class="c r" style="left:166px;width:64px">joe4</span>
<span class="c r" style="left:230px;width:64px">joe4</span>
<span class="c" style="left:294px;width:127px">[Light - Standard][To...</span>
<span class="c" style="left:421px;width:127px;letter-spacing:-0.11px">Vehicle Inoperable</span>
<span class="c" style="left:548px;width:127px;letter-spacing:-0.19px">2005 Blue Ford F150</span>
<span class="c r" style="left:675px;width:96px">02-07 08:15</span>
<span class="c r" style="left:771px;width:96px">02-07 10:35</span>
<span class="c r" style="left:867px;width:96px">02-07 10:59</span>
<span class="c r" style="left:963px;width:127px">139.6</span>
<span class="c r" style="left:1090px;width:96px">163.6</span>
<span class="c r" style="left:1186px;width:75px">13</span>
<span class="c r" style="left:1261px;width:75px">6</span>
<span class="c r" style="left:1336px;width:64px">19</span>
</div>
<div class="row" style="top:439px">
<span class="c r" style="left:1px;width:59px">1101708</span>
<span class="c" style="left:60px;width:106px;letter-spacing:-0.6px">MONTROSE CHEVY</span>
<span class="c r" style="left:166px;width:64px">1001</span>
<span class="c r" style="left:230px;width:64px">1001</span>
<span class="c" style="left:294px;width:127px">[Light - Standard][To...</span>
<span class="c" style="left:421px;width:127px;letter-spacing:-0.11px">Vehicle Inoperable</span>
<span class="c" style="left:548px;width:127px;letter-spacing:-0.19px">2005 Blue Ford F150</span>
<span class="c r" style="left:675px;width:96px">02-07 08:18</span>
<span class="c r" style="left:771px;width:96px">02-06 10:59</span>
<span class="c r" style="left:867px;width:96px">02-06 11:24</span>
<span class="c r" style="left:963px;width:127px">-1279.7</span>
<span class="c r" style="left:1090px;width:96px">-1254.7</span>
<span class="c r" style="left:1186px;width:75px">5</span>
<span class="c r" style="left:1261px;width:75px">5</span>
<span class="c r" style="left:1336px;width:64px">10</span>
</div>
<div class="row" style="top:460px">
<span class="c r" style="left:1px;width:59px">1101710</span>
<span class="c" style="left:60px;width:106px;letter-spacing:-0.6px">MONTROSE CHEVY</span>
<span class="c r" style="left:166px;width:64px">1001</span>
<span class="c r" style="left:230px;width:64px">1001</span>
<span class="c" style="left:294px;width:127px">[Light - Standard][To...</span>
<span class="c" style="left:421px;width:127px;letter-spacing:-0.11px">Vehicle Inoperable</span>
<span class="c" style="left:548px;width:127px;letter-spacing:-0.19px">2005 Blue Ford F150</span>
<span class="c r" style="left:675px;width:96px">02-07 08:24</span>
<span class="c r" style="left:867px;width:96px">02-07 10:54</span>
<span class="c r" style="left:1090px;width:96px">149.7</span>
<span class="c r" style="left:1336px;width:64px">24</span>
</div>
<div class="row" style="top:481px">
<span class="c r" style="left:1px;width:59px">1101715</span>
<span class="c" style="left:60px;width:106px;letter-spacing:-0.6px">MONTROSE CHEVY</span>
<span class="c r" style="left:166px;width:64px">1001</span>
<span class="c r" style="left:230px;width:64px">calgar</span>
<span class="c" style="left:294px;width:127px">[Light - Standard][To...</span>
<span class="c" style="left:421px;width:127px;letter-spacing:-0.11px">Vehicle Inoperable</span>
<span class="c" style="left:548px;width:127px;letter-spacing:-0.19px">2005 Blue Ford F150</span>
<span class="c r" style="left:675px;width:96px">02-08 06:24</span>
<span class="c r" style="left:771px;width:96px">02-08 08:19</span>
<span class="c r" style="left:867px;width:96px">02-08 10:25</span>
<span class="c r" style="left:963px;width:127px">114.5</span>
<span class="c r" style="left:1090px;width:96px">240.5</span>
<span class="c r" style="left:1186px;width:75px">25</span>
<span class="c r" style="left:1261px;width:75px">7</span>
<span class="c r" style="left:1336px;width:64px">32</span>
</div>
<div class="row" style="top:502px">
<span class="c r" style="left:1px;width:59px">1101716</span>
<span class="c" style="left:60px;width:106px;letter-spacing:-0.6px">MONTROSE CHEVY</span>
<span class="c r" style="left:166px;width:64px">1001</span>
<span class="c r" style="left:230px;width:64px">1001</span>
<span class="c" style="left:294px;width:127px">[Light - Standard][To...</span>
<span class="c" style="left:421px;width:127px;letter-spacing:-0.11px">Vehicle Inoperable</span>
<span class="c" style="left:548px;width:127px;letter-spacing:-0.19px">2005 Blue Ford F150</span>
<span class="c r" style="left:675px;width:96px">02-08 08:05</span>
<span class="c r" style="left:771px;width:96px">02-08 13:54</span>
<span class="c r" style="left:867px;width:96px">02-08 15:13</span>
<span class="c r" style="left:963px;width:127px">348.3</span>
<span class="c r" style="left:1090px;width:96px">427.3</span>
<span class="c r" style="left:1186px;width:75px">25</span>
<span class="c r" style="left:1261px;width:75px">21</span>
<span class="c r" style="left:1336px;width:64px">46</span>
</div>
<div class="row" style="top:523px">
<span class="c r" style="left:1px;width:59px">1101725</span>
<span class="c" style="left:60px;width:106px;letter-spacing:-0.6px">MONTROSE CHEVY</span>
<span class="c r" style="left:166px;width:64px">jas</span>
<span class="c r" style="left:230px;width:64px">jas</span>
<span class="c" style="left:294px;width:127px">[Light - Standard][To...</span>
<span class="c" style="left:421px;width:127px;letter-spacing:-0.11px">Vehicle Inoperable</span>
<span class="c" style="left:548px;width:127px;letter-spacing:-0.19px">2005 Blue Ford F150</span>
<span class="c r" style="left:675px;width:96px">02-12 17:52</span>
<span class="c r" style="left:771px;width:96px">02-18 13:17</span>
<span class="c r" style="left:867px;width:96px">02-18 13:49</span>
<span class="c r" style="left:963px;width:127px">8365.2</span>
<span class="c r" style="left:1090px;width:96px">8397.3</span>
<span class="c r" style="left:1186px;width:75px">14</span>
<span class="c r" style="left:1261px;width:75px">9</span>
<span class="c r" style="left:1336px;width:64px">23</span>
</div>
<div class="row" style="top:544px">
<span class="c r" style="left:1px;width:59px">1101727</span>
<span class="c" style="left:60px;width:106px;letter-spacing:-0.6px">MONTROSE CHEVY</span>
<span class="c r" style="left:166px;width:64px">jas</span>
<span class="c r" style="left:230px;width:64px">jas</span>
<span class="c" style="left:294px;width:127px">[Light - Standard][To...</span>
<span class="c" style="left:421px;width:127px;letter-spacing:-0.11px">Vehicle Inoperable</span>
<span class="c" style="left:548px;width:127px;letter-spacing:-0.19px">2005 Blue Ford F150</span>
<span class="c r" style="left:675px;width:96px">02-18 11:52</span>
<span class="c r" style="left:771px;width:96px">02-18 13:55</span>
<span class="c r" style="left:867px;width:96px">02-18 14:00</span>
<span class="c r" style="left:963px;width:127px">122.6</span>
<span class="c r" style="left:1090px;width:96px">127.5</span>
<span class="c r" style="left:1186px;width:75px">12</span>
<span class="c r" style="left:1261px;width:75px">5</span>
<span class="c r" style="left:1336px;width:64px">17</span>
</div>
<div class="grp" style="top:565px"><i class="gi"></i><span class="sx" style="transform:scaleX(1.098)">Class/offering: [Medium - Standard][Towing - Standard] (2 Jobs)</span></div>
<div class="row" style="top:594px">
<span class="c r" style="left:1px;width:59px">1101439</span>
<span class="c" style="left:60px;width:106px;letter-spacing:-0.23px">FAIRLAWN POLI...</span>
<span class="c r" style="left:166px;width:64px">jas</span>
<span class="c r" style="left:230px;width:64px">jas</span>
<span class="c" style="left:294px;width:127px;letter-spacing:-0.15px">[Medium - Standard][T...</span>
<span class="c" style="left:548px;width:127px;letter-spacing:-0.15px">GMC Suburban 1500</span>
<span class="c r" style="left:675px;width:96px">09-28 08:16</span>
<span class="c r" style="left:771px;width:96px">01-03 09:48</span>
<span class="c r" style="left:867px;width:96px">01-03 09:53</span>
<span class="c r" style="left:963px;width:127px">139771.5</span>
<span class="c r" style="left:1090px;width:96px">139777</span>
<span class="c r" style="left:1186px;width:75px">8</span>
<span class="c r" style="left:1261px;width:75px">6</span>
<span class="c r" style="left:1336px;width:64px">14</span>
</div>
<div class="row" style="top:615px">
<span class="c r" style="left:1px;width:59px">1101669</span>
<span class="c" style="left:60px;width:106px;letter-spacing:-0.23px">FAIRLAWN POLI...</span>
<span class="c r" style="left:166px;width:64px">jas</span>
<span class="c r" style="left:230px;width:64px">jas</span>
<span class="c" style="left:294px;width:127px;letter-spacing:-0.15px">[Medium - Standard][T...</span>
<span class="c" style="left:548px;width:127px;letter-spacing:-0.15px">GMC Suburban 1500</span>
<span class="c r" style="left:675px;width:96px">01-03 07:43</span>
<span class="c r" style="left:771px;width:96px">01-03 11:17</span>
<span class="c r" style="left:867px;width:96px">01-03 12:35</span>
<span class="c r" style="left:963px;width:127px">213.6</span>
<span class="c r" style="left:1090px;width:96px">292.1</span>
<span class="c r" style="left:1186px;width:75px">8</span>
<span class="c r" style="left:1261px;width:75px">7</span>
<span class="c r" style="left:1336px;width:64px">15</span>
</div>
  </div>
 </div>
 <div id="south">
  <svg style="left:574px;top:3px" width="15" height="12" viewBox="0 0 16 13"><path d="M.5 2.5Q.5 .5 2.5 .5H5.5L7 2.5H13.5Q15.5 2.5 15.5 4.5V10.5Q15.5 12.5 13.5 12.5H2.5Q.5 12.5 .5 10.5Z" fill="#f7e27e" stroke="#c9a53f"/><path d="M1.2 4.5H14.8" stroke="#fdf3b8"/></svg>
  <div id="slbl">Messages and auto club dispatches</div>
  <div class="tool" style="left:1397px;top:3px"><svg style="left:0;top:0" width="13" height="13" viewBox="0 0 13 13"><path d="M3.5 6L6.5 3L9.5 6M3.5 10L6.5 7L9.5 10" fill="none" stroke="#2f5a9a" stroke-width="1.2"/></svg></div>
 </div>
</div>
</div>
</body></html>
